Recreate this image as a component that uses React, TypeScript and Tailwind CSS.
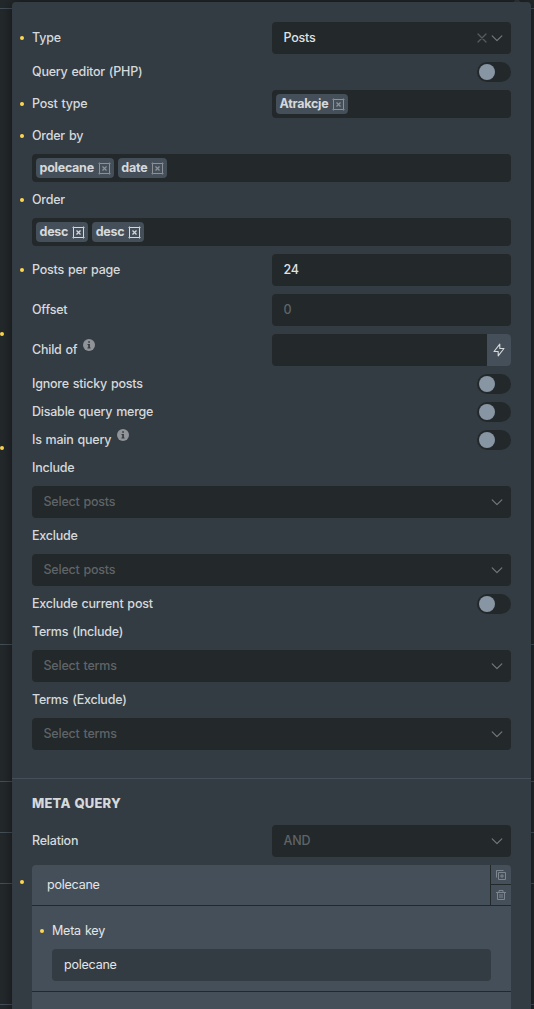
import type { ReactNode } from "react";

const Dot = ({ className = "-left-3" }: { className?: string }) => (
  <span className={`absolute top-1/2 -mt-0.5 size-1 rounded-full bg-[#ffd64f] ${className}`} />
);

const ChevronIcon = () => (
  <svg viewBox="0 0 12 12" className="size-3" fill="none" stroke="currentColor" strokeWidth="1.2" strokeLinecap="round" strokeLinejoin="round">
    <path d="M1.2 3.8 6 8.6l4.8-4.8" />
  </svg>
);

const CloseIcon = () => (
  <svg viewBox="0 0 12 12" className="size-3" fill="none" stroke="currentColor" strokeWidth="1.3" strokeLinecap="round">
    <path d="m2 2 8 8M10 2l-8 8" />
  </svg>
);

const BoxCloseIcon = () => (
  <svg viewBox="0 0 13 13" className="size-[13px]" fill="none" stroke="currentColor">
    <path d="M1.5 1.5h10v10h-10z" />
    <path strokeWidth="1.3" d="m4.5 4.5 4 4M8.5 4.5l-4 4" />
    <path strokeWidth="0.8" d="M.4 1.5h1M1.5.4v1M11.6 1.5h1M11.5.4v1M.4 11.5h1M1.5 11.6v1M11.6 11.5h1M11.5 11.6v1" />
  </svg>
);

const InfoIcon = () => (
  <svg viewBox="0 0 12 12" className="size-3 -mt-2.5 text-[#909498]">
    <circle cx="6" cy="6" r="6" fill="currentColor" />
    <path d="M5.2 2.2h1.7v1.6H5.2zM4.5 4.9h2.4v3.7h.7v1H4.4v-1h.8V5.9h-.7z" fill="#343c43" />
  </svg>
);

const BoltIcon = () => (
  <svg viewBox="0 0 12 14" className="w-3 h-3.5" fill="none" stroke="currentColor" strokeWidth="1.1" strokeLinejoin="round">
    <path d="M6.8 1.2v4.3h4.2L5.2 12.8V8.5H1z" />
  </svg>
);

const DuplicateIcon = () => (
  <svg viewBox="0 0 12 12" className="size-3" fill="none" stroke="currentColor">
    <path d="M1.5 8.5v-7h7M3.5 3.5h7v7h-7zM7 5v4M5 7h4" />
  </svg>
);

const TrashIcon = () => (
  <svg viewBox="0 0 12 12" className="size-3" fill="none" stroke="currentColor">
    <path d="M1 3.5h10M4 3.5v-2h4v2M2.5 3.5v7h7v-7M5 5v4M7 5v4" />
  </svg>
);

type LabelProps = {
  children: ReactNode;
  dot?: boolean;
  info?: boolean;
};

const Label = ({ children, dot, info }: LabelProps) => (
  <div className="relative flex h-5 items-center gap-1.5">
    {dot && <Dot />}
    <span>{children}</span>
    {info && <InfoIcon />}
  </div>
);

const Row = ({ label, dot, info, children }: { label: string; dot?: boolean; info?: boolean; children: ReactNode }) => (
  <div className="flex items-center justify-between">
    <Label dot={dot} info={info}>{label}</Label>
    {children}
  </div>
);

const Toggle = () => (
  <button className="flex h-5 w-[34px] items-center rounded-full bg-[#23282b] px-0.5">
    <span className="size-4 rounded-full bg-[#8896a3]" />
  </button>
);

type SelectProps = {
  value: string;
  filled?: boolean;
  className?: string;
};

const Select = ({ value, filled, className = "w-full" }: SelectProps) => (
  <div className={`flex h-8 items-center rounded bg-[#23282b] pl-[11.5px] pr-2 ${className}`}>
    <span className={filled ? "flex-1 text-[#dfe1e3]" : "flex-1 text-[#5f6467]"}>{value}</span>
    <div className="flex items-center gap-[3px]">
      {filled && <span className="text-[#565b5f]"><CloseIcon /></span>}
      <span className="text-[#73787b]"><ChevronIcon /></span>
    </div>
  </div>
);

const Tags = ({ items, bright, className = "w-full" }: { items: string[]; bright?: boolean; className?: string }) => (
  <div className={`flex h-7 items-center gap-1 rounded bg-[#23282b] px-1 ${className}`}>
    {items.map((item, i) => (
      <div key={i} className="flex h-5 items-center gap-1 rounded bg-[#454f59] pl-[3.5px] pr-[3px] font-bold tracking-[-0.25px]">
        {item}
        <span className={bright ? "text-[#d5d8db]" : "text-[#8b9197]"}>
          <BoxCloseIcon />
        </span>
      </div>
    ))}
  </div>
);

// lines of the sidebar that stay visible on both sides of the popup
const dividers = ["top-2", "top-[644px]", "top-[781px]", "top-[832px]", "top-[883px]", "top-[1004px]"];

export default function App() {
  return (
    <div className="relative h-[1009px] w-[534px] overflow-hidden bg-[#23282b] pl-3 pr-[3px] pt-0.5 font-['Inter',sans-serif] text-[12.5px] font-[550] leading-5 tracking-[-0.22px] text-[#d6d9db] [word-spacing:0.8px]">
      {dividers.map((top) => (
        <div key={top} className={`absolute left-0 h-px w-full bg-[#454f59] ${top}`} />
      ))}
      <span className="absolute left-0 top-[332px] size-1 rounded-full bg-[#ffd64f]" />
      <span className="absolute left-0 top-[446px] size-1 rounded-full bg-[#ffd64f]" />
      <span className="absolute right-[13px] top-0 size-2 rotate-45 bg-[#343c43]" />

      <div className="relative h-[1020px] rounded-t bg-[#343c43] shadow-[0_0_12px_rgba(0,0,0,0.5)]">
        <div className="flex flex-col gap-2 px-5 pb-7 pt-5">
          <Row label="Type" dot>
            <Select value="Posts" filled className="w-[239px]" />
          </Row>
          <Row label="Query editor (PHP)"><Toggle /></Row>
          <Row label="Post type" dot>
            <Tags items={["Atrakcje"]} className="w-[239px]" />
          </Row>
          <Label dot>Order by</Label>
          <Tags items={["polecane", "date"]} />
          <Label dot>Order</Label>
          <Tags items={["desc", "desc"]} bright />
          <Row label="Posts per page" dot>
            <div className="flex h-8 w-[239px] items-center rounded bg-[#23282b] px-[11.5px] text-[#dfe1e3]">24</div>
          </Row>
          <Row label="Offset">
            <div className="flex h-8 w-[239px] items-center rounded bg-[#23282b] px-[11.5px] text-[#5f6467]">0</div>
          </Row>
          <Row label="Child of" info>
            <div className="flex h-8 w-[239px] justify-end overflow-hidden rounded bg-[#23282b]">
              <button className="flex w-6 items-center justify-center bg-[#454f59]">
                <BoltIcon />
              </button>
            </div>
          </Row>
          <Row label="Ignore sticky posts"><Toggle /></Row>
          <Row label="Disable query merge"><Toggle /></Row>
          <Row label="Is main query" info><Toggle /></Row>
          <Label>Include</Label>
          <Select value="Select posts" />
          <Label>Exclude</Label>
          <Select value="Select posts" />
          <Row label="Exclude current post"><Toggle /></Row>
          <Label>Terms (Include)</Label>
          <Select value="Select terms" />
          <Label>Terms (Exclude)</Label>
          <Select value="Select terms" />
        </div>

        <div className="border-t border-[#454f59] px-5 pt-[14px]">
          <h3 className="mb-3 text-[13px] font-extrabold tracking-[0.2px]">META QUERY</h3>
          <Row label="Relation">
            <Select value="AND" className="w-[239px]" />
          </Row>
          <div className="relative mt-2 rounded-t bg-[#454f59] font-normal text-[#e3e5e7]">
            <span className="absolute -left-3 top-[15px] size-1 rounded-full bg-[#ffd64f]" />
            <div className="flex h-[41px] border-b border-[#23282b]">
              <div className="flex-1 pl-[15px] leading-10">polecane</div>
              <div className="flex w-[21px] flex-col border-l border-[#23282b] text-[#7d868e]">
                <button className="flex h-5 items-center justify-center border-b border-[#23282b]"><DuplicateIcon /></button>
                <button className="flex h-5 items-center justify-center"><TrashIcon /></button>
              </div>
            </div>
            <div className="flex h-[86px] flex-col gap-2 border-b border-[#23282b] px-5 pt-[15px]">
              <Label dot>Meta key</Label>
              <div className="flex h-8 items-center rounded bg-[#343c43] px-3">polecane</div>
            </div>
            <div className="h-10" />
          </div>
        </div>
      </div>
    </div>
  );
}
